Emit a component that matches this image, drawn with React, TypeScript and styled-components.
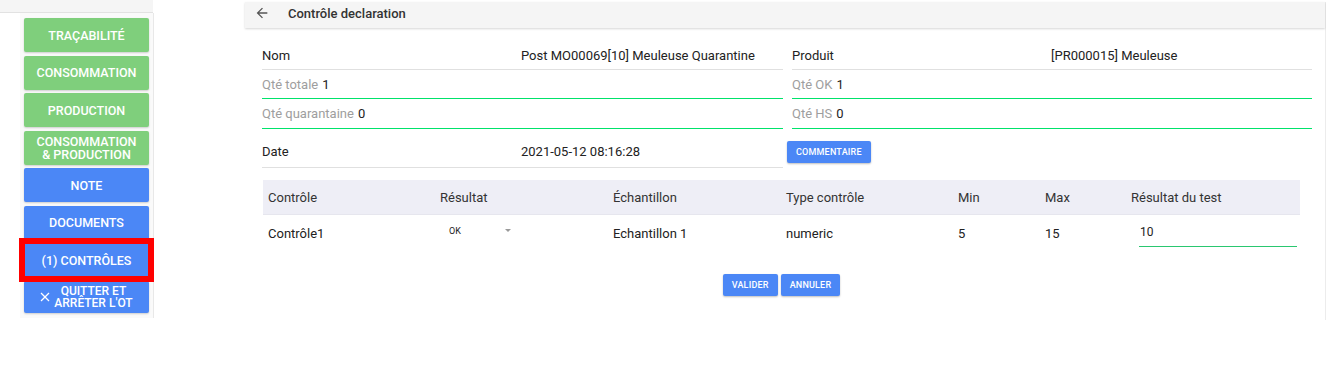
import React from "react";
import styled, { createGlobalStyle } from "styled-components";

const GlobalStyle = createGlobalStyle`
  body {
    margin: 0;
    background: #fff;
    font-family: Roboto, "Liberation Sans", Arial, sans-serif;
    color: #222;
  }
`;

const Page = styled.div`
  display: flex;
  align-items: flex-start;
  width: 1326px;
  height: 381px;
`;

const Sidebar = styled.aside`
  width: 155px;
  display: flex;
  flex-direction: column;
`;

const TopStrip = styled.div`
  height: 12px;
  width: 153px;
  background: #f5f5f5;
  border-bottom: 1px solid #e2e2e2;
`;

const ButtonPanel = styled.div`
  margin-left: 20px;
  width: 134px;
  box-sizing: border-box;
  padding: 5px 0 5px 4px;
  background: #fafafa;
  border-right: 1px solid #e8e8e8;
  display: flex;
  flex-direction: column;
  gap: 3.5px;
`;

const SideButton = styled.button<{ $tone: "green" | "blue"; $marked?: boolean }>`
  width: 125px;
  height: 34px;
  border: none;
  border-radius: ${(p) => (p.$marked ? 0 : 2)}px;
  padding: 0 3px;
  background: ${(p) => (p.$tone === "green" ? "#7fcf7c" : "#4b87f6")};
  color: #fff;
  font-family: Roboto, "Liberation Sans", Arial, sans-serif;
  font-size: 12.5px;
  font-weight: 500;
  line-height: 13px;
  text-transform: uppercase;
  box-shadow: 0 1px 2px rgba(0, 0, 0, 0.18);
  display: flex;
  align-items: center;
  justify-content: center;
  gap: 4px;
  outline: ${(p) => (p.$marked ? "6px solid #ff0000" : "none")};
  outline-offset: -1px;
  position: relative;
  z-index: ${(p) => (p.$marked ? 1 : 0)};
`;

const QuitLabel = styled.span`
  text-align: center;
  font-size: 12px;
  line-height: 12px;
`;

const Main = styled.main`
  margin-left: 90px;
  margin-top: 2px;
  width: 1080px;
  height: 318px;
  border-right: 1px solid #ececec;
  display: flex;
  flex-direction: column;
`;

const Header = styled.header`
  height: 26px;
  box-sizing: border-box;
  padding: 0 0 4px 9px;
  background: #f5f5f5;
  box-shadow: 0 1px 2px rgba(0, 0, 0, 0.16);
  display: flex;
  align-items: center;
  gap: 18px;
`;

const Title = styled.span`
  font-size: 13px;
  font-weight: 500;
  color: #333;
`;

const Body = styled.div`
  padding: 13px 13px 0 17px;
`;

const Form = styled.div`
  display: grid;
  grid-template-columns: 521px 520px;
  column-gap: 9px;
`;

const FieldRow = styled.div<{ $h: number; $pt?: number }>`
  height: ${(p) => p.$h}px;
  padding-top: ${(p) => p.$pt ?? 1}px;
  padding-bottom: 1px;
  box-sizing: content-box;
  display: grid;
  grid-template-columns: 259px 1fr;
  align-items: center;
  font-size: 13px;
  border-bottom: 1px solid #e0e0e0;
`;

const QtyRow = styled.div<{ $h: number; $pt?: number }>`
  height: ${(p) => p.$h}px;
  padding-top: ${(p) => p.$pt ?? 0}px;
  padding-bottom: ${(p) => (p.$pt ? 0 : 1)}px;
  display: flex;
  align-items: center;
  gap: 4px;
  font-size: 13px;
  border-bottom: 1px solid #00e36b;
`;

const QtyLabel = styled.span`
  color: #9e9e9e;
`;

const ButtonCell = styled.div`
  margin-left: -5px;
  padding-top: 11px;
`;

const SmallButton = styled.button`
  height: 22px;
  padding: 0 9px;
  border: none;
  border-radius: 2px;
  background: #4b87f6;
  color: #fff;
  font-family: Roboto, "Liberation Sans", Arial, sans-serif;
  font-size: 9px;
  font-weight: 500;
  letter-spacing: 0.2px;
  text-transform: uppercase;
  box-shadow: 0 1px 2px rgba(0, 0, 0, 0.25);
`;

const TableWrap = styled.div`
  margin: 12px 0 0 1px;
  width: 1037px;
`;

const TableGrid = styled.div<{ $head?: boolean }>`
  display: grid;
  grid-template-columns: 172px 173px 173px 172px 87px 86px 1fr;
  height: ${(p) => (p.$head ? 34 : 36)}px;
  align-items: center;
  background: ${(p) => (p.$head ? "#eeeef6" : "transparent")};
  border-bottom: ${(p) => (p.$head ? "1px solid #e6e6ee" : "none")};
  font-size: 13px;
  color: ${(p) => (p.$head ? "#333" : "#222")};
`;

const Cell = styled.div`
  padding-left: 5px;
`;

const SelectBox = styled.div`
  display: flex;
  align-items: center;
  justify-content: space-between;
  width: 62px;
  margin-left: 9px;
  margin-top: -5px;
  font-size: 9px;
  color: #222;
`;

const Caret = styled.span`
  width: 0;
  height: 0;
  border-left: 3px solid transparent;
  border-right: 3px solid transparent;
  border-top: 3px solid #9a9a9a;
`;

const TestInput = styled.div`
  margin-left: 8px;
  margin-top: 4px;
  width: 158px;
  height: 24px;
  padding: 1px 0 0 1px;
  box-sizing: border-box;
  border-bottom: 1px solid #2ac770;
  font-size: 12px;
  line-height: 16px;
`;

const Actions = styled.div`
  display: flex;
  justify-content: center;
  gap: 3px;
  margin-top: 23px;
`;

const BackArrow = () => (
  <svg width="16" height="16" viewBox="0 0 24 24" fill="#555">
    <path d="M20 11H7.83l5.59-5.59L12 4l-8 8 8 8 1.41-1.41L7.83 13H20v-2z" />
  </svg>
);

const CloseIcon = () => (
  <svg width="10" height="10" viewBox="0 0 10 10" stroke="#fff" strokeWidth="1.3">
    <line x1="1" y1="1" x2="9" y2="9" />
    <line x1="9" y1="1" x2="1" y2="9" />
  </svg>
);

const sideButtons: { label: React.ReactNode; key: string; tone: "green" | "blue"; marked?: boolean }[] = [
  { key: "trac", label: "Traçabilité", tone: "green" },
  { key: "cons", label: "Consommation", tone: "green" },
  { key: "prod", label: "Production", tone: "green" },
  {
    key: "consprod",
    label: (
      <span>
        Consommation
        <br />& Production
      </span>
    ),
    tone: "green",
  },
  { key: "note", label: "Note", tone: "blue" },
  { key: "docs", label: "Documents", tone: "blue" },
  { key: "ctrl", label: "(1) Contrôles", tone: "blue", marked: true },
];

const headers = ["Contrôle", "Résultat", "Échantillon", "Type contrôle", "Min", "Max", "Résultat du test"];

const App = () => {
  return (
    <Page>
      <GlobalStyle />
      <Sidebar>
        <TopStrip />
        <ButtonPanel>
          {sideButtons.map((b) => (
            <SideButton key={b.key} $tone={b.tone} $marked={b.marked}>
              {b.label}
            </SideButton>
          ))}
          <SideButton $tone="blue" style={{ height: 32 }}>
            <CloseIcon />
            <QuitLabel>
              Quitter et
              <br />
              arrêter l'OT
            </QuitLabel>
          </SideButton>
        </ButtonPanel>
      </Sidebar>

      <Main>
        <Header>
          <BackArrow />
          <Title>Contrôle declaration</Title>
        </Header>
        <Body>
          <Form>
            <FieldRow $h={26}>
              <span>Nom</span>
              <span>Post MO00069[10] Meuleuse Quarantine</span>
            </FieldRow>
            <FieldRow $h={26}>
              <span>Produit</span>
              <span>[PR000015] Meuleuse</span>
            </FieldRow>
            <QtyRow $h={27} $pt={1}>
              <QtyLabel>Qté totale</QtyLabel>1
            </QtyRow>
            <QtyRow $h={27} $pt={1}>
              <QtyLabel>Qté OK</QtyLabel>1
            </QtyRow>
            <QtyRow $h={28}>
              <QtyLabel>Qté quarantaine</QtyLabel>0
            </QtyRow>
            <QtyRow $h={28}>
              <QtyLabel>Qté HS</QtyLabel>0
            </QtyRow>
            <FieldRow $h={30} $pt={7}>
              <span>Date</span>
              <span>2021-05-12 08:16:28</span>
            </FieldRow>
            <ButtonCell>
              <SmallButton>Commentaire</SmallButton>
            </ButtonCell>
          </Form>

          <TableWrap>
            <TableGrid $head>
              {headers.map((h) => (
                <Cell key={h}>{h}</Cell>
              ))}
            </TableGrid>
            <TableGrid>
              <Cell>Contrôle1</Cell>
              <Cell>
                <SelectBox>
                  <span>OK</span>
                  <Caret />
                </SelectBox>
              </Cell>
              <Cell>Echantillon 1</Cell>
              <Cell>numeric</Cell>
              <Cell>5</Cell>
              <Cell>15</Cell>
              <Cell>
                <TestInput>10</TestInput>
              </Cell>
            </TableGrid>
            <Actions>
              <SmallButton>Valider</SmallButton>
              <SmallButton>Annuler</SmallButton>
            </Actions>
          </TableWrap>
        </Body>
      </Main>
    </Page>
  );
};

export default App;
